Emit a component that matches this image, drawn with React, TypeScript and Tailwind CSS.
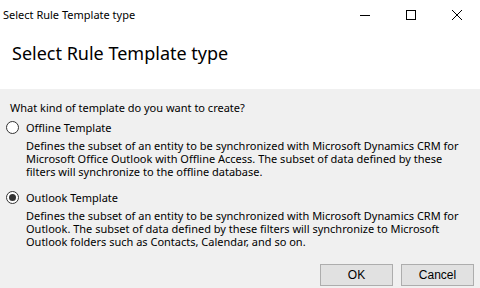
import React, { useState } from 'react';

const font = { fontFamily: '"Segoe UI", "Noto Sans", sans-serif' };

const Radio: React.FC<{ checked: boolean; onClick: () => void }> = ({ checked, onClick }) => (
  <button
    onClick={onClick}
    className="w-[13px] h-[13px] rounded-full border border-[#333333] bg-white flex items-center justify-center shrink-0"
  >
    {checked && <span className="w-[7px] h-[7px] rounded-full bg-[#333333]" />}
  </button>
);

const options = [
  {
    id: 'offline',
    label: 'Offline Template',
    lines: [
      'Defines the subset of an entity to be synchronized with Microsoft Dynamics CRM for',
      'Microsoft Office Outlook with Offline Access. The subset of data defined by these',
      'filters will synchronize to the offline database.',
    ],
  },
  {
    id: 'outlook',
    label: 'Outlook Template',
    lines: [
      'Defines the subset of an entity to be synchronized with Microsoft Dynamics CRM for',
      'Outlook. The subset of data defined by these filters will synchronize to Microsoft',
      'Outlook folders such as Contacts, Calendar, and so on.',
    ],
  },
];

export default function App() {
  const [selected, setSelected] = useState('outlook');

  return (
    <div className="w-[480px] h-[288px] flex flex-col bg-[#f0f0f0] text-black overflow-hidden" style={font}>
      {/* title bar */}
      <div className="h-[30px] bg-white flex items-center shrink-0">
        <div className="flex-1 pl-[3px] text-[11px]">Select Rule Template type</div>
        <div className="flex h-full">
          <div className="w-[46px] flex items-center justify-center">
            <svg width="10" height="10" viewBox="0 0 10 10"><path d="M0 5.5h10" stroke="#000" strokeWidth="1" /></svg>
          </div>
          <div className="w-[46px] flex items-center justify-center">
            <svg width="10" height="10" viewBox="0 0 10 10"><rect x="0.5" y="0.5" width="9" height="9" fill="none" stroke="#000" strokeWidth="1" /></svg>
          </div>
          <div className="w-[46px] flex items-center justify-center">
            <svg width="10" height="10" viewBox="0 0 10 10"><path d="M0 0L10 10M10 0L0 10" stroke="#000" strokeWidth="1" /></svg>
          </div>
        </div>
      </div>

      {/* header */}
      <div className="h-[59px] bg-white shrink-0 pl-[12px] pt-[10px]">
        <div className="text-[18px] leading-[26px]">Select Rule Template type</div>
      </div>

      {/* body */}
      <div className="flex-1 flex flex-col text-[11px] leading-[13px]">
        <div className="pl-[10px] pt-[12px]">What kind of template do you want to create?</div>

        {options.map((o, i) => (
          <div key={o.id} className={i === 0 ? 'mt-[5px]' : 'mt-[11px]'}>
            <div className="flex items-center gap-[7px] pl-[6px] h-[16px]">
              <Radio checked={selected === o.id} onClick={() => setSelected(o.id)} />
              <span>{o.label}</span>
            </div>
            <div className="pl-[26px] pt-[4px]">
              {o.lines.map((l) => (
                <div key={l} className="whitespace-nowrap">{l}</div>
              ))}
            </div>
          </div>
        ))}

        <div className="mt-auto flex justify-end gap-[8px] pr-[6px] pb-[2px]">
          <button className="w-[73px] h-[22px] bg-[#e1e1e1] border border-[#adadad] text-[12px]" style={{ fontFamily: '"Liberation Sans", Arial, sans-serif' }}>
            OK
          </button>
          <button className="w-[73px] h-[22px] bg-[#e1e1e1] border border-[#adadad] text-[12px]" style={{ fontFamily: '"Liberation Sans", Arial, sans-serif' }}>
            Cancel
          </button>
        </div>
      </div>
    </div>
  );
}
